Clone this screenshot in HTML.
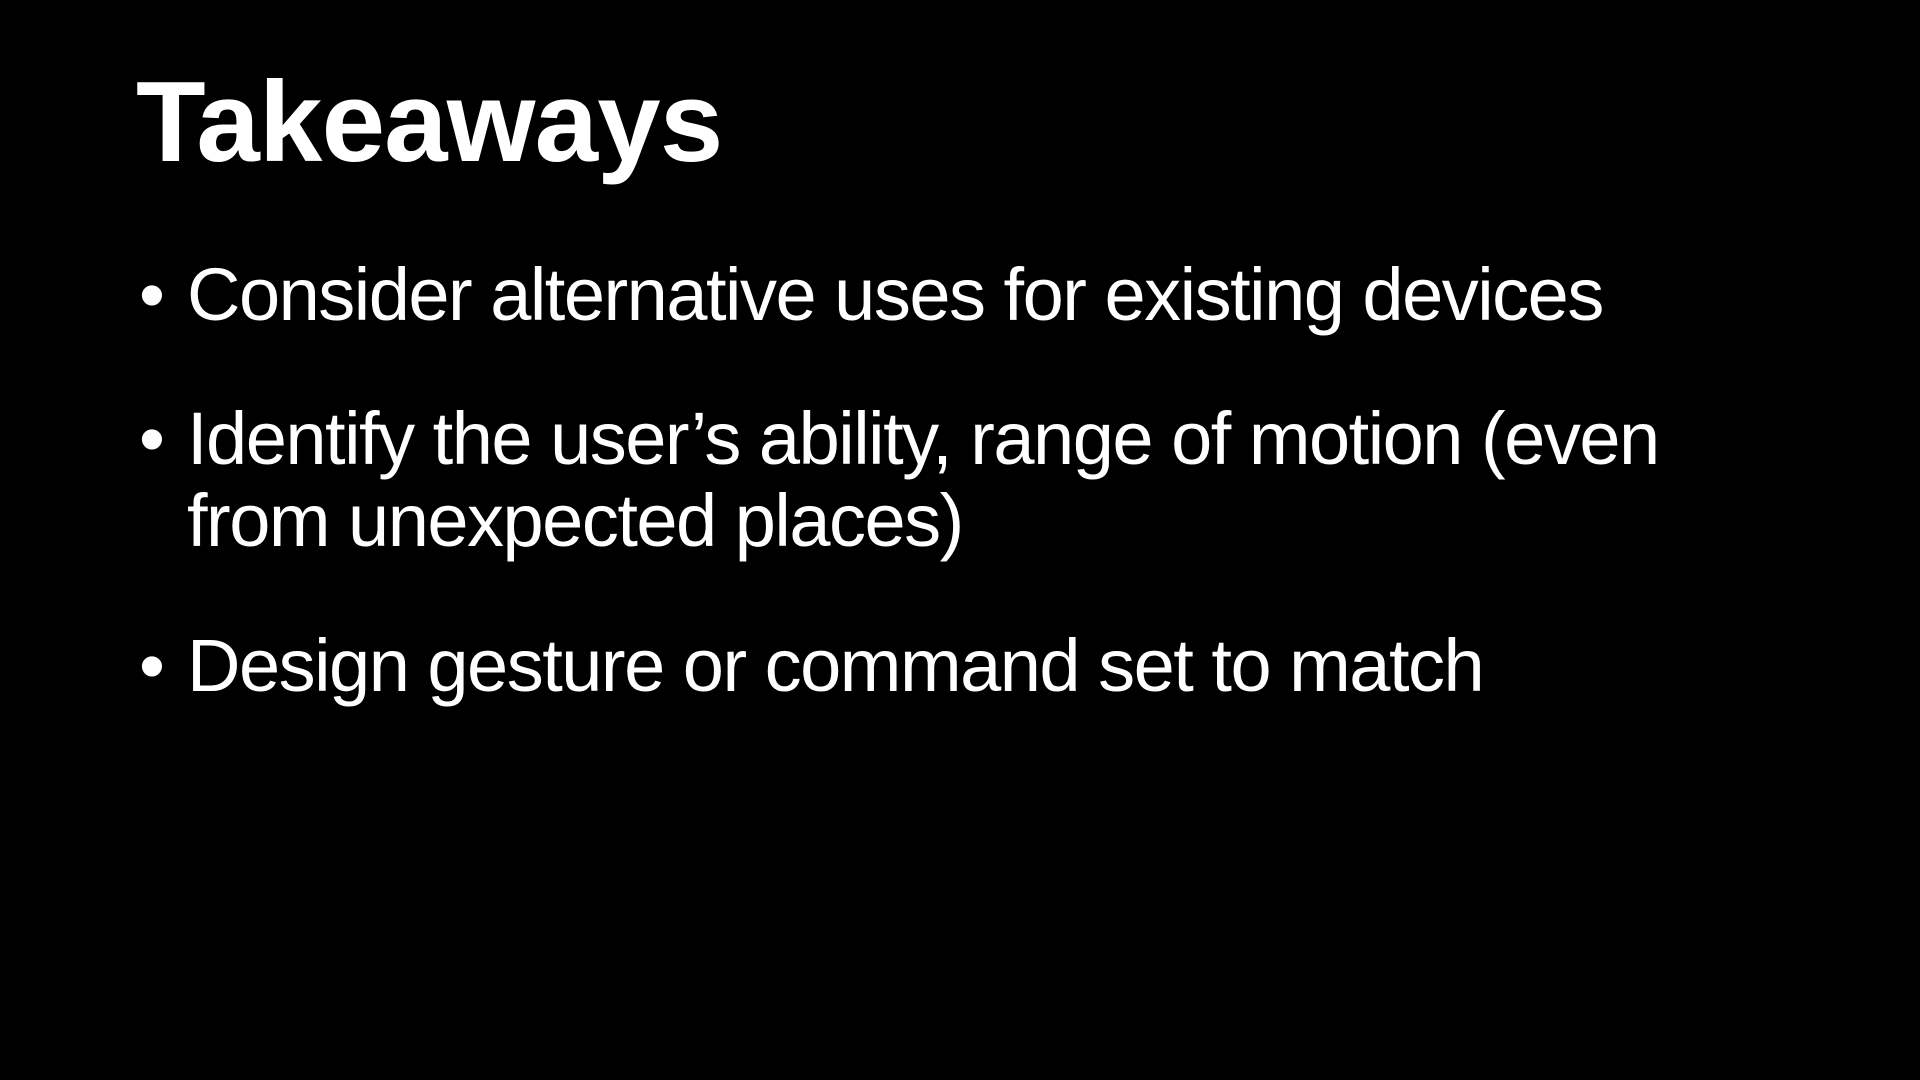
<!DOCTYPE html>
<html><head><meta charset="utf-8"><style>
html,body{margin:0;padding:0;background:#000;width:1920px;height:1080px;overflow:hidden}
body{font-family:"Liberation Sans",Arial,sans-serif;color:#fff;position:relative}
.t{position:absolute;left:136px;top:66px;font-size:114px;font-weight:bold;line-height:114px;letter-spacing:-0.8px;white-space:nowrap}
.l{position:absolute;left:187px;font-size:74px;line-height:82px;letter-spacing:-1.5px;white-space:nowrap}
.b{position:absolute;left:139px;font-size:74px;line-height:82px}
</style></head><body>
<div class="t">Takeaways</div>
<div class="b" style="top:254px">•</div>
<div class="l" style="top:254px">Consider alternative uses for existing devices</div>
<div class="b" style="top:398px">•</div>
<div class="l" style="top:398px">Identify the user’s ability, range of motion (even</div>
<div class="l" style="top:480px">from unexpected places)</div>
<div class="b" style="top:625px">•</div>
<div class="l" style="top:625px">Design gesture or command set to match</div>
</body></html>
